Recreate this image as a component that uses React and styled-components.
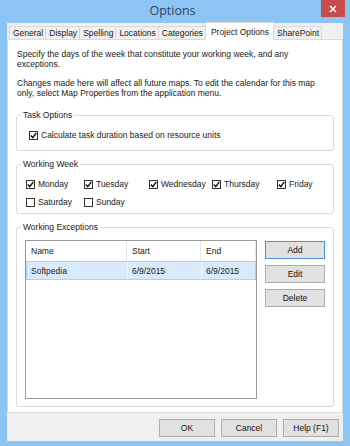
import React from "react";
import styled, { createGlobalStyle } from "styled-components";

const GlobalStyle = createGlobalStyle`
  html, body {
    margin: 0;
    padding: 0;
  }
  body {
    font-family: "Liberation Sans", Arial, sans-serif;
    font-size: 8.5px;
    color: #1a1a1a;
  }
`;

const TABS = [
  "General",
  "Display",
  "Spelling",
  "Locations",
  "Categories",
  "Project Options",
  "SharePoint",
];

const DAYS = [
  { name: "Monday", checked: true },
  { name: "Tuesday", checked: true },
  { name: "Wednesday", checked: true },
  { name: "Thursday", checked: true },
  { name: "Friday", checked: true },
  { name: "Saturday", checked: false },
  { name: "Sunday", checked: false },
];

const Check = ({ checked, children }) => (
  <CheckRow>
    <Box>
      {checked && (
        <svg width="7" height="7" viewBox="0 0 7 7">
          <path d="M0.8 3.6 L2.7 5.6 L6.3 1" fill="none" stroke="#111" strokeWidth="1.4" />
        </svg>
      )}
    </Box>
    <span>{children}</span>
  </CheckRow>
);

const App = () => {
  return (
    <Window>
      <GlobalStyle />
      <TitleBar>
        <span />
        <Title>Options</Title>
        <CloseButton>
          <svg width="8" height="8" viewBox="0 0 8 8">
            <path d="M1 1 L7 7 M7 1 L1 7" stroke="#fff" strokeWidth="1.5" />
          </svg>
        </CloseButton>
      </TitleBar>

      <Client>
        <TabStrip>
          {TABS.map((t) => (
            <Tab key={t} $active={t === "Project Options"}>
              {t}
            </Tab>
          ))}
        </TabStrip>

        <Panel>
          <Intro>
            Specify the days of the week that constitute your working week, and any exceptions.
          </Intro>
          <Intro $gap>
            Changes made here will affect all future maps. To edit the calendar for this map
            only, select Map Properties from the application menu.
          </Intro>

          <Group $top={12}>
            <Legend>Task Options</Legend>
            <TaskBody>
              <Check checked>Calculate task duration based on resource units</Check>
            </TaskBody>
          </Group>

          <Group $top={8}>
            <Legend>Working Week</Legend>
            <WeekGrid>
              {DAYS.map((d) => (
                <Check key={d.name} checked={d.checked}>
                  {d.name}
                </Check>
              ))}
            </WeekGrid>
          </Group>

          <Group $top={8} $grow>
            <Legend>Working Exceptions</Legend>
            <ExceptionsBody>
              <ListView>
                <ListHeader>
                  <HeadCell>Name</HeadCell>
                  <HeadCell>Start</HeadCell>
                  <HeadCell>End</HeadCell>
                </ListHeader>
                <ListRow $selected>
                  <RowCell>Softpedia</RowCell>
                  <RowCell>6/9/2015</RowCell>
                  <RowCell>6/9/2015</RowCell>
                </ListRow>
              </ListView>
              <SideButtons>
                <Button $default>Add</Button>
                <Button>Edit</Button>
                <Button>Delete</Button>
              </SideButtons>
            </ExceptionsBody>
          </Group>
        </Panel>

        <Footer>
          <Button $wide>OK</Button>
          <Button $wide>Cancel</Button>
          <Button $wide>Help (F1)</Button>
        </Footer>
      </Client>
    </Window>
  );
};

const Window = styled.div`
  width: 350px;
  height: 446px;
  background: #8cc5f3;
  display: flex;
  flex-direction: column;
  padding-bottom: 5px;
  box-sizing: border-box;
`;

const TitleBar = styled.div`
  height: 23px;
  display: grid;
  grid-template-columns: 1fr auto 1fr;
  align-items: start;
  padding-right: 5px;
`;

const Title = styled.div`
  font-family: "Open Sans", "Liberation Sans", sans-serif;
  font-size: 12.5px;
  line-height: 22px;
  color: #2b4560;
`;

const CloseButton = styled.div`
  justify-self: end;
  width: 24px;
  height: 17px;
  background: #c84c4c;
  display: flex;
  align-items: center;
  justify-content: center;
`;

const Client = styled.div`
  flex: 1;
  margin: 0 7px;
  background: #f0f0f0;
  display: flex;
  flex-direction: column;
`;

const TabStrip = styled.div`
  height: 17px;
  display: flex;
  align-items: flex-end;
  padding-left: 3px;
  margin-bottom: -1px;
`;

const Tab = styled.div`
  position: relative;
  z-index: ${(p) => (p.$active ? 1 : 0)};
  height: ${(p) => (p.$active ? "18px" : "14px")};
  box-sizing: border-box;
  padding: ${(p) => (p.$active ? "0 4px 0 5px" : "0 2px 0 3px")};
  border: 1px solid #d9d9d9;
  border-bottom: ${(p) => (p.$active ? "none" : "1px solid #d9d9d9")};
  margin-left: -1px;
  background: ${(p) => (p.$active ? "#fff" : "#f0f0f0")};
  display: flex;
  align-items: center;
  color: #1a1a1a;
  white-space: nowrap;
`;

const Panel = styled.div`
  flex: 1;
  background: #fff;
  border: 1px solid #d9d9d9;
  padding: 9px 8px 5px 8px;
  display: flex;
  flex-direction: column;
  min-height: 0;
`;

const Intro = styled.p`
  margin: ${(p) => (p.$gap ? "9px" : "0")} 0 0 0;
  padding: 0 8px 0 1px;
  line-height: 10px;
`;

const Group = styled.fieldset`
  margin: ${(p) => p.$top}px 0 0 0;
  border: 1px solid #dcdcdc;
  border-radius: 3px;
  padding: 0;
  min-width: 0;
  flex: ${(p) => (p.$grow ? 1 : "none")};
  display: flex;
  flex-direction: column;
`;

const Legend = styled.legend`
  margin-left: 4px;
  padding: 0 2px;
  line-height: 10px;
`;

const TaskBody = styled.div`
  padding: 10px 12px 10px 12px;
`;

const WeekGrid = styled.div`
  display: grid;
  grid-template-columns: 58px 65px 63px 65px auto;
  row-gap: 8px;
  padding: 10px 9px 6px 9px;
`;

const CheckRow = styled.label`
  display: flex;
  align-items: center;
  gap: 3px;
  height: 10px;
  line-height: 10px;
  white-space: nowrap;
`;

const Box = styled.span`
  width: 9px;
  height: 9px;
  box-sizing: border-box;
  border: 1px solid #333;
  background: #fff;
  display: flex;
  align-items: center;
  justify-content: center;
`;

const ExceptionsBody = styled.div`
  flex: 1;
  display: flex;
  gap: 8px;
  padding: 8px 8px 7px 8px;
`;

const ListView = styled.div`
  width: 233px;
  border: 1px solid #9a9a9a;
  box-sizing: border-box;
  background: #fff;
`;

const ListHeader = styled.div`
  display: grid;
  grid-template-columns: 101px 74px 1fr;
  height: 20px;
`;

const HeadCell = styled.div`
  display: flex;
  align-items: center;
  padding-left: 5px;
  border-right: 1px solid #e5e5e5;
`;

const ListRow = styled.div`
  display: grid;
  grid-template-columns: 101px 74px 1fr;
  height: 19px;
  box-sizing: border-box;
  background: ${(p) => (p.$selected ? "#d9ebfb" : "transparent")};
  border: 1px solid ${(p) => (p.$selected ? "#a8d2f5" : "transparent")};
`;

const RowCell = styled.div`
  display: flex;
  align-items: center;
  padding-left: 4px;
  border-right: 1px solid #f0f6fc;
  &:last-child {
    border-right: none;
  }
`;

const SideButtons = styled.div`
  display: flex;
  flex-direction: column;
  gap: 6px;
  padding-top: 1px;
`;

const Button = styled.div`
  width: ${(p) => (p.$wide ? "56px" : "60px")};
  height: 18px;
  box-sizing: border-box;
  background: #e1e1e1;
  border: 1px solid ${(p) => (p.$default ? "#4a90d9" : "#adadad")};
  display: flex;
  align-items: center;
  justify-content: center;
  color: #111;
`;

const Footer = styled.div`
  height: 28px;
  display: flex;
  justify-content: flex-end;
  align-items: flex-start;
  gap: 6px;
  padding: 6px 4px 0 0;
  box-sizing: border-box;
`;

export default App;
